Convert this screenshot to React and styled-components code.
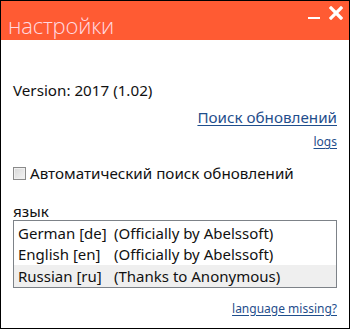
import React from "react";
import styled, { createGlobalStyle } from "styled-components";

const Global = createGlobalStyle`
  html, body { margin: 0; padding: 0; background: #fff; }
  body { font-family: "Noto Sans", "Liberation Sans", sans-serif; }
`;

const Window = styled.div`
  width: 350px;
  height: 329px;
  box-sizing: border-box;
  border: 1px solid #000;
  display: flex;
  flex-direction: column;
  background: #fff;
  overflow: hidden;
`;

const TitleBar = styled.div`
  height: 39px;
  background: #ff5b33;
  display: flex;
  align-items: flex-start;
  justify-content: space-between;
  padding: 0 6px 0 7px;
`;

const Title = styled.div`
  color: #ffd9e0;
  font-family: "Open Sans", sans-serif;
  font-weight: 300;
  font-size: 22px;
  line-height: 22px;
  margin-top: 13px;
  letter-spacing: -0.2px;
`;

const Controls = styled.div`
  display: flex;
  align-items: flex-start;
  gap: 8px;
  margin-top: 5px;
`;

const IconButton = styled.div`
  width: 14px;
  height: 14px;
  display: flex;
`;

const Body = styled.div`
  flex: 1;
  display: flex;
  flex-direction: column;
  padding: 0 12px 0 12px;
  font-size: 15.2px;
  color: #111;
`;

const Version = styled.div`
  margin-top: 40px;
  line-height: 20px;
`;

const LinkRow = styled.div`
  display: flex;
  justify-content: flex-end;
  margin-top: ${(p) => p.$mt}px;
`;

const Link = styled.a`
  color: #1f4e8c;
  text-decoration: underline;
  text-underline-offset: 2px;
  font-size: ${(p) => p.$size}px;
  line-height: ${(p) => p.$size + 5}px;
  cursor: pointer;
`;

const CheckRow = styled.label`
  display: flex;
  align-items: center;
  gap: 4px;
  margin-top: 13px;
  line-height: 20px;
`;

const Box = styled.span`
  width: 11px;
  height: 11px;
  border: 1px solid #8a8a8a;
  background: linear-gradient(135deg, #d8d8d8, #f4f4f4);
  box-shadow: inset 0 0 0 1px #f0f0f0;
  display: inline-block;
`;

const Label = styled.div`
  margin-top: 21px;
  line-height: 14px;
`;

const List = styled.div`
  margin-top: 2px;
  border: 1px solid #7d8288;
  display: flex;
  flex-direction: column;
  padding: 1px 0 0;
`;

const Row = styled.div`
  display: grid;
  grid-template-columns: 96px 1fr;
  height: 21.5px;
  align-items: center;
  padding-left: 4px;
  font-size: 15px;
  background: ${(p) => (p.$selected ? "#efefef" : "transparent")};
`;

const rows = [
  ["German [de]", "(Officially by Abelssoft)"],
  ["English [en]", "(Officially by Abelssoft)"],
  ["Russian [ru]", "(Thanks to Anonymous)"],
];

export default function App() {
  return (
    <>
      <Global />
      <Window>
        <TitleBar>
          <Title>настройки</Title>
          <Controls>
            <IconButton>
              <svg width="14" height="14" viewBox="0 0 14 14">
                <rect x="1" y="11" width="12" height="2" fill="#fff" />
              </svg>
            </IconButton>
            <IconButton>
              <svg width="14" height="14" viewBox="0 0 14 14">
                <path d="M2 2 L12 12 M12 2 L2 12" stroke="#fff" strokeWidth="3.2" strokeLinecap="square" />
              </svg>
            </IconButton>
          </Controls>
        </TitleBar>
        <Body>
          <Version>Version: 2017 (1.02)</Version>
          <LinkRow $mt={7}>
            <Link $size={15.2}>Поиск обновлений</Link>
          </LinkRow>
          <LinkRow $mt={6}>
            <Link $size={12}>logs</Link>
          </LinkRow>
          <CheckRow>
            <Box />
            Автоматический поиск обновлений
          </CheckRow>
          <Label>язык</Label>
          <List>
            {rows.map(([a, b], i) => (
              <Row key={a} $selected={i === 2}>
                <span>{a}</span>
                <span>{b}</span>
              </Row>
            ))}
          </List>
          <LinkRow $mt={12}>
            <Link $size={12}>language missing?</Link>
          </LinkRow>
        </Body>
      </Window>
    </>
  );
}
